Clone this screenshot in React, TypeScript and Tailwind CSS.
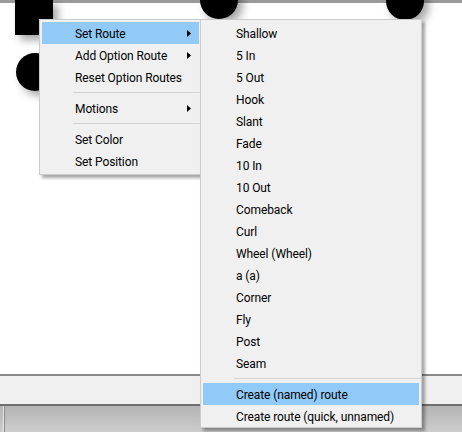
import React from 'react';

const mainItems: (string | null)[] = [
  'Set Route',
  'Add Option Route',
  'Reset Option Routes',
  null,
  'Motions',
  null,
  'Set Color',
  'Set Position',
];
const withArrow = ['Set Route', 'Add Option Route', 'Motions'];

const routes: (string | null)[] = [
  'Shallow', '5 In', '5 Out', 'Hook', 'Slant', 'Fade', '10 In', '10 Out',
  'Comeback', 'Curl', 'Wheel (Wheel)', 'a (a)', 'Corner', 'Fly', 'Post', 'Seam',
  null,
  'Create (named) route',
  'Create route (quick, unnamed)',
];

function Arrow() {
  return (
    <svg width="4" height="7" viewBox="0 0 4 7" className="absolute right-[8px] top-[8px]">
      <path d="M0 0 L4 3.5 L0 7 Z" fill="#000" />
    </svg>
  );
}

function Item({ label, active, arrow }: { label: string; active?: boolean; arrow?: boolean }) {
  return (
    <div className={`relative h-[22px] mx-[2px] pl-[33px] leading-[24px] whitespace-nowrap tracking-[-0.1px] ${active ? 'bg-[#91c9f7]' : ''}`}>
      {label}
      {arrow && <Arrow />}
    </div>
  );
}

function Separator() {
  return (
    <div className="h-[9px] flex items-center pl-[33px]">
      <div className="w-full h-px bg-[#d5d5d5]" />
    </div>
  );
}

export default function App() {
  return (
    <div className="relative w-[462px] h-[432px] overflow-hidden bg-white flex flex-col text-[12px] text-black" style={{ fontFamily: 'Roboto, "Noto Sans", sans-serif' }}>
      {/* top strip */}
      <div className="h-[3px] bg-[#9a9a9a]" />

      {/* canvas with players */}
      <div className="relative flex-1 bg-white">
        <div className="absolute left-[15px] top-[-3px] w-[38px] h-[35px] bg-black shadow-[5px_5px_8px_rgba(0,0,0,0.35)]" />
        <div className="absolute left-[16px] top-[50px] w-[38px] h-[38px] rounded-full bg-black shadow-[5px_5px_8px_rgba(0,0,0,0.35)]" />
        <div className="absolute left-[200px] top-[-22px] w-[38px] h-[38px] rounded-full bg-black shadow-[5px_5px_8px_rgba(0,0,0,0.35)]" />
        <div className="absolute left-[386px] top-[-21px] w-[38px] h-[38px] rounded-full bg-black shadow-[5px_5px_8px_rgba(0,0,0,0.35)]" />
      </div>

      {/* status strip */}
      <div className="h-[2px] bg-[#8a8a8a]" />
      <div className="h-[28px] bg-[#f0f0f0]" />
      <div className="h-[2px] bg-[#6f6f6f]" />
      <div className="h-[26px] flex bg-gradient-to-b from-[#b4b4b4] to-[#cdcdcd]">
        <div className="w-[3px]" />
        <div className="w-px bg-[#e8e8e8]" />
        <div className="w-px bg-[#8a8a8a]" />
      </div>

      {/* context menu */}
      <div className="absolute left-[39px] top-[19px] w-[163px] pt-[2px] pb-[2px] bg-[#f0f0f0] border border-[#cccccc] shadow-[3px_3px_3px_rgba(0,0,0,0.35)]">
        {mainItems.map((it, i) =>
          it === null ? (
            <Separator key={i} />
          ) : (
            <Item key={i} label={it} active={it === 'Set Route'} arrow={withArrow.includes(it)} />
          )
        )}
      </div>

      {/* submenu */}
      <div className="absolute left-[200px] top-[19px] w-[222px] pt-[2px] bg-[#f0f0f0] border border-[#cccccc] shadow-[3px_3px_3px_rgba(0,0,0,0.35)]">
        {routes.map((it, i) =>
          it === null ? (
            <Separator key={i} />
          ) : (
            <Item key={i} label={it} active={it === 'Create (named) route'} />
          )
        )}
      </div>
    </div>
  );
}
